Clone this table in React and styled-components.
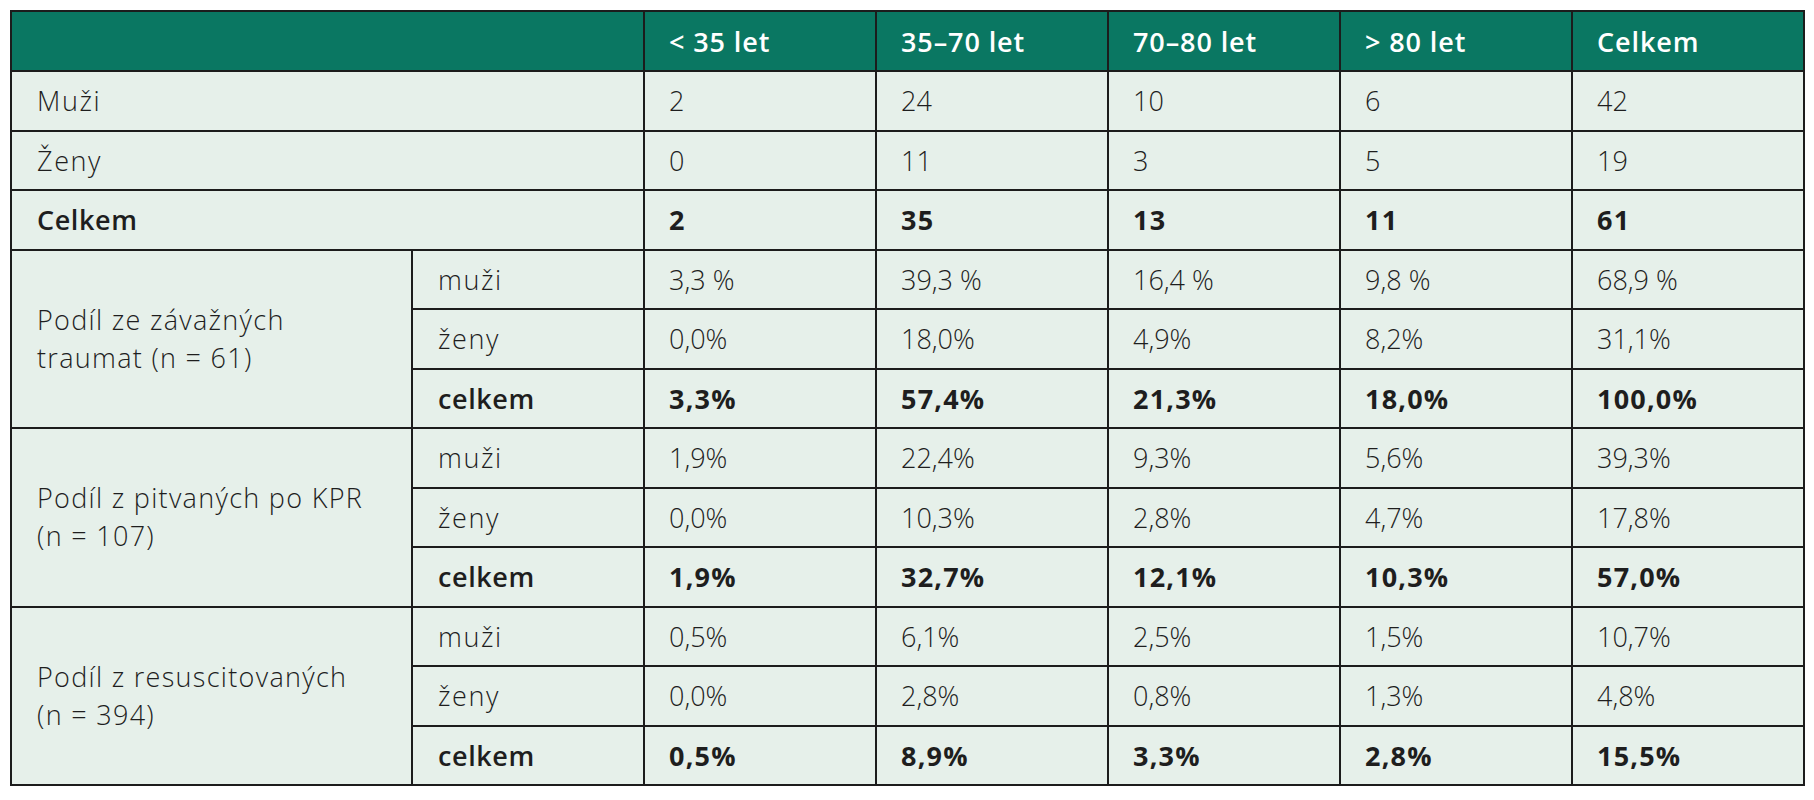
import React from "react";
import styled, { createGlobalStyle } from "styled-components";

const GlobalStyle = createGlobalStyle`
  body {
    margin: 0;
    background: #fff;
    font-family: "Open Sans", "Liberation Sans", sans-serif;
  }
`;

const AGES = ["< 35 let", "35–70 let", "70–80 let", "> 80 let", "Celkem"];

const COUNTS = [
  { label: "Muži", values: ["2", "24", "10", "6", "42"] },
  { label: "Ženy", values: ["0", "11", "3", "5", "19"] },
  { label: "Celkem", values: ["2", "35", "13", "11", "61"], bold: true },
];

const GROUPS = [
  {
    label: ["Podíl ze závažných", "traumat (n = 61)"],
    rows: [
      ["muži", "3,3 %", "39,3 %", "16,4 %", "9,8 %", "68,9 %"],
      ["ženy", "0,0%", "18,0%", "4,9%", "8,2%", "31,1%"],
      ["celkem", "3,3%", "57,4%", "21,3%", "18,0%", "100,0%"],
    ],
  },
  {
    label: ["Podíl z pitvaných po KPR", "(n = 107)"],
    rows: [
      ["muži", "1,9%", "22,4%", "9,3%", "5,6%", "39,3%"],
      ["ženy", "0,0%", "10,3%", "2,8%", "4,7%", "17,8%"],
      ["celkem", "1,9%", "32,7%", "12,1%", "10,3%", "57,0%"],
    ],
  },
  {
    label: ["Podíl z resuscitovaných", "(n = 394)"],
    rows: [
      ["muži", "0,5%", "6,1%", "2,5%", "1,5%", "10,7%"],
      ["ženy", "0,0%", "2,8%", "0,8%", "1,3%", "4,8%"],
      ["celkem", "0,5%", "8,9%", "3,3%", "2,8%", "15,5%"],
    ],
  },
];

const App = () => {
  return (
    <Page>
      <GlobalStyle />
      <Table>
        <colgroup>
          <col style={{ width: 401 }} />
          <col style={{ width: 232 }} />
          {AGES.map(a => (
            <col key={a} style={{ width: 232 }} />
          ))}
        </colgroup>
        <thead>
          <tr>
            <HeadCell colSpan={2} />
            {AGES.map(a => (
              <HeadCell key={a}>{a}</HeadCell>
            ))}
          </tr>
        </thead>
        <tbody>
          {COUNTS.map(row => (
            <Row key={row.label}>
              <LabelCell colSpan={2} bold={row.bold}>
                {row.label}
              </LabelCell>
              {row.values.map((v, i) => (
                <NumCell key={i} bold={row.bold}>
                  {v}
                </NumCell>
              ))}
            </Row>
          ))}
          {GROUPS.map(group =>
            group.rows.map(([sex, ...values], idx) => {
              const bold = sex === "celkem";
              return (
                <Row key={group.label[0] + sex}>
                  {idx === 0 && (
                    <GroupCell rowSpan={3}>
                      {group.label[0]}
                      <br />
                      {group.label[1]}
                    </GroupCell>
                  )}
                  <LabelCell bold={bold}>{sex}</LabelCell>
                  {values.map((v, i) => (
                    <NumCell key={i} bold={bold}>
                      {v}
                    </NumCell>
                  ))}
                </Row>
              );
            })
          )}
        </tbody>
      </Table>
    </Page>
  );
};

export default App;

const Page = styled.div`
  padding: 10px;
`;

const Table = styled.table`
  width: 1795px;
  table-layout: fixed;
  border-collapse: collapse;
  border: 2px solid #1c1c1c;
  background-color: #e6f0ea;
  color: #1e1e1e;
  font-size: 27px;
`;

const Row = styled.tr`
  height: 59.5px;
`;

const HeadCell = styled.th`
  height: 58px;
  background-color: #0a7762;
  color: #fff;
  font-weight: 600;
  text-align: left;
  letter-spacing: 0.9px;
  padding: 0 24px;
  border: 2px solid #1c1c1c;
`;

const LabelCell = styled.td`
  padding: 0 25px;
  border: 2px solid #1c1c1c;
  font-weight: ${props => (props.bold ? 600 : 300)};
  letter-spacing: ${props => (props.bold ? "0.6px" : "1.6px")};
  white-space: nowrap;
`;

const NumCell = styled.td`
  padding: 0 24px;
  border: 2px solid #1c1c1c;
  font-weight: ${props => (props.bold ? 700 : 300)};
  letter-spacing: ${props => (props.bold ? "1.2px" : "0")};
  white-space: nowrap;
`;

const GroupCell = styled.td`
  padding: 0 25px;
  border: 2px solid #1c1c1c;
  font-weight: 300;
  letter-spacing: 1.3px;
  line-height: 38px;
`;
